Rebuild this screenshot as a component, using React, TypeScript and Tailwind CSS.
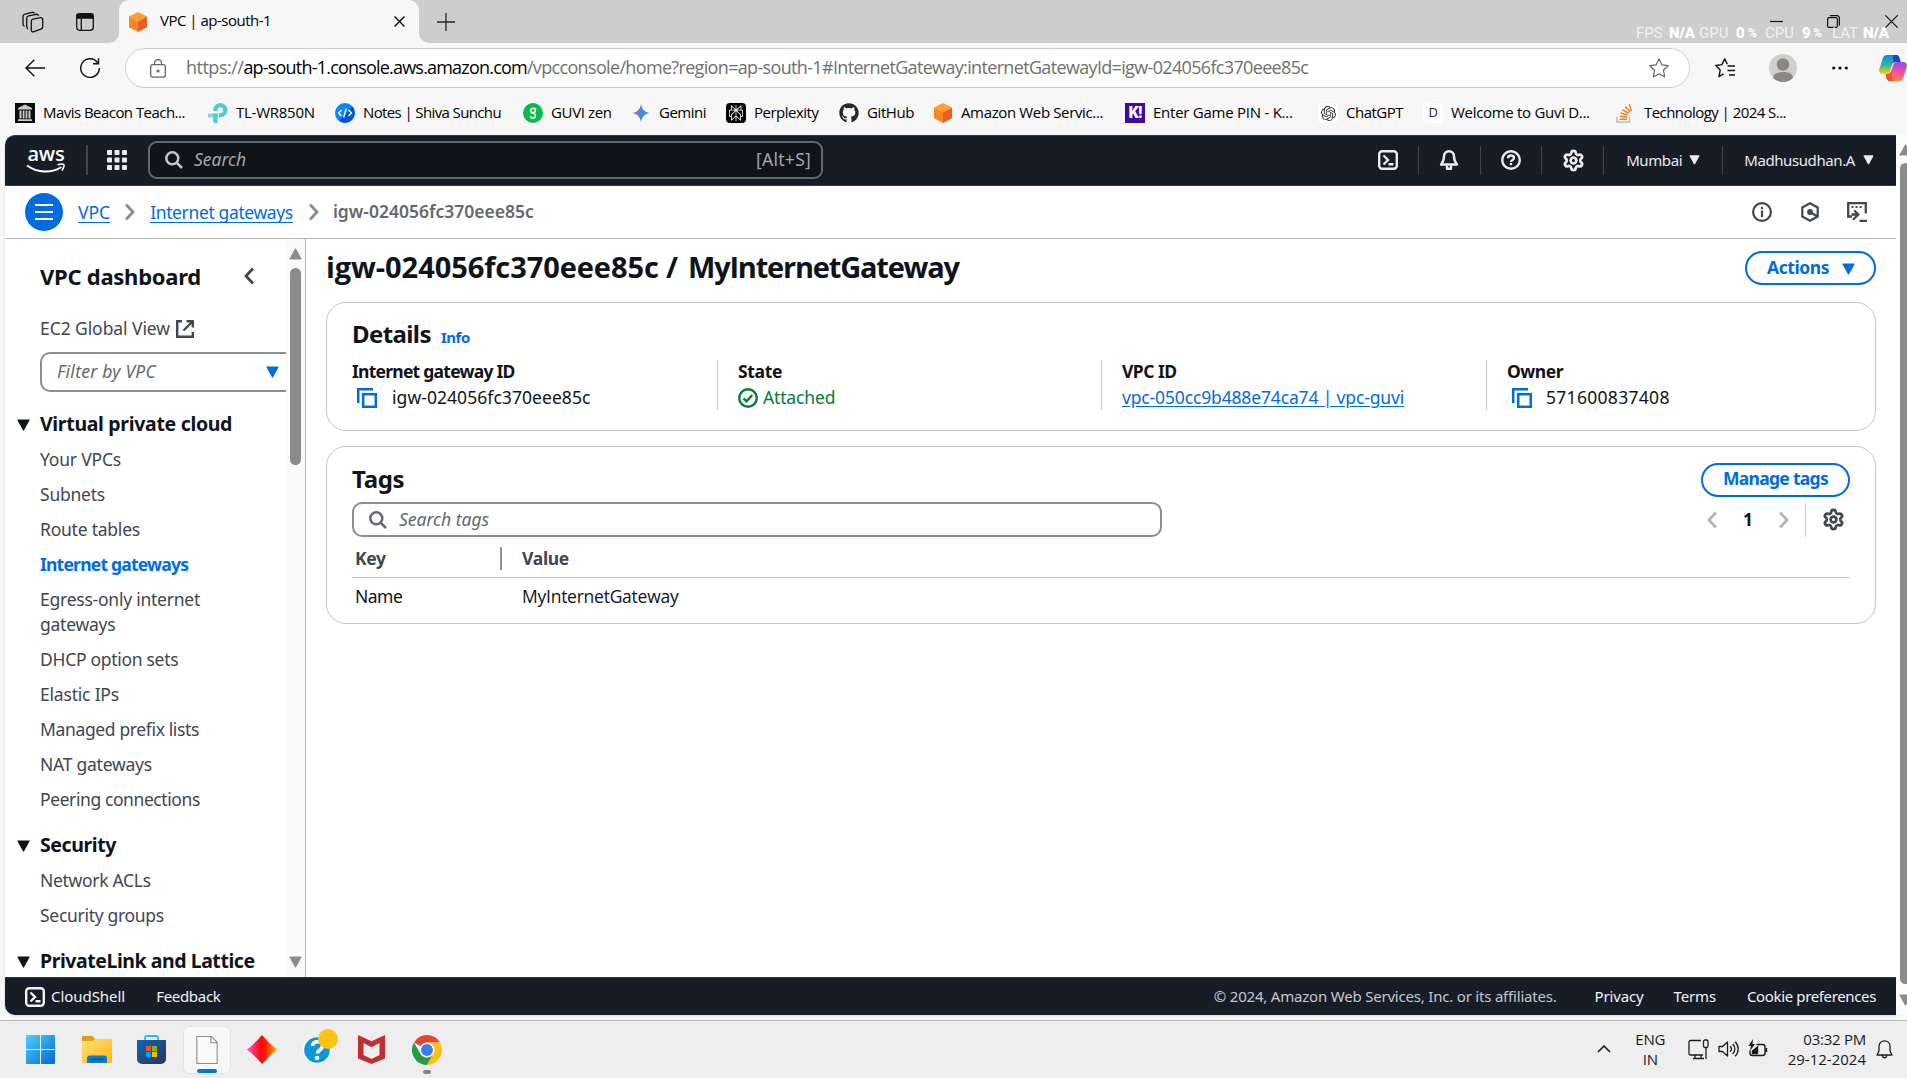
import type { ReactNode } from 'react'
import { Settings } from 'lucide-react'
import { FaGithub, FaStackOverflow } from 'react-icons/fa'
import { SiOpenai, SiPerplexity } from 'react-icons/si'

function Caret({ className = '' }: { className?: string }) {
  return (
    <svg viewBox="0 0 13 12" className={'shrink-0 ' + (className || 'h-3 w-[13px]')} fill="currentColor" stroke="currentColor" strokeWidth="1.2" strokeLinejoin="round">
      <path d="M1 1h11L6.5 11z" />
    </svg>
  )
}

function Chevron({ left = false, className = '' }: { left?: boolean; className?: string }) {
  return (
    <svg viewBox="0 0 10 18" className={'h-[18px] w-[10px] shrink-0 ' + className} fill="none" stroke="currentColor" strokeWidth="2.8">
      <path d={left ? 'M9 1.5L2 9l7 7.5' : 'M1 1.5L8 9l-7 7.5'} />
    </svg>
  )
}

function SearchIcon({ className = '' }: { className?: string }) {
  return (
    <svg viewBox="0 0 18 18" className={'size-[18px] shrink-0 ' + className} fill="none" stroke="currentColor" strokeWidth="2.5">
      <circle cx="7.3" cy="7.3" r="6" />
      <path d="M11.6 11.6L17 17" />
    </svg>
  )
}

function ShellIcon() {
  return (
    <svg viewBox="0 0 20 20" className="size-5 shrink-0" fill="none" stroke="currentColor" strokeWidth="2.4">
      <rect x="1.2" y="1.2" width="17.6" height="17.6" rx="3" />
      <path d="M5.5 5.500L10 10l-4.500 4.500M10.500 14.200h5" />
    </svg>
  )
}

function CopyIcon() {
  return (
    <svg viewBox="0 0 20 20" className="size-5 shrink-0 text-[#006ce0]" fill="none" stroke="currentColor" strokeWidth="2.5">
      <rect x="6.200" y="6.200" width="12.600" height="12.600" />
      <path d="M1.200 15V1.200H16" />
    </svg>
  )
}

function Cube() {
  return (
    <svg viewBox="0 0 18 20" className="h-5 w-[18px] shrink-0">
      <path d="M9 0l9 4.500L9 9.300 0 4.500z" fill="#ffa02f" />
      <path d="M0 4.500l9 4.800V20l-9-4.700z" fill="#f98523" />
      <path d="M18 4.500L9 9.300V20l9-4.700z" fill="#ec5f20" />
    </svg>
  )
}

/* ---------- Browser chrome ---------- */

function TabBar() {
  return (
    <div className="flex h-[43px] bg-[#f7f7f7]">
      <div className="flex w-[119px] items-center rounded-br-[10px] bg-[#cdcdcd] pl-[22px]">
        <svg viewBox="0 0 22 22" className="size-[22px]" fill="none" stroke="#111" strokeWidth="1.300" strokeLinejoin="round">
          <path d="M11 8.200l7.500-1.500c1.200-.2 2.200.5 2.200 1.800v7.300c0 1.200-.6 2-1.800 2.400l-7 2.500c-1.500.5-2.600-.2-2.600-1.700v-8.500c0-1.200.6-2 1.700-2.300z" />
          <path d="M6.200 17.800c-1-.3-1.500-1-1.500-2.200V7.200c0-1.200.8-2 1.900-2.300L14 3.300c1.200-.2 2.200.3 2.500 1.500M2.500 15.300C1.500 15 1 14.300 1 13.100V5.400C1 4.200 1.800 3.400 3 3.100l7-1.700c1.200-.2 2 .1 2.500 1" />
        </svg>
        <svg viewBox="0 0 18 18" className="ml-8 size-[18px]" fill="none" stroke="#111" strokeWidth="1.300">
          <rect x=".7" y=".7" width="16.600" height="16.600" rx="3" />
          <path d="M1 1.500h16V5H1z" fill="#111" />
          <path d="M5.300 5v12" />
        </svg>
      </div>
      <div className="bg-[#cdcdcd]">
        <div className="flex h-full w-[300px] items-center rounded-t-[10px] bg-[#f7f7f7] pl-[10px]">
          <Cube />
          <span className="ml-[13px] w-[234px] pb-0.5 text-[15px] tracking-[-0.5px]">VPC | ap-south-1</span>
          <svg viewBox="0 0 11 11" className="size-[11px]" stroke="#111" strokeWidth="1.500"><path d="M.5.5l10 10M10.500.5l-10 10" /></svg>
        </div>
      </div>
      <div className="relative flex flex-1 items-center rounded-bl-[10px] bg-[#cdcdcd] pl-[18px]">
        <svg viewBox="0 0 18 18" className="size-[18px]" stroke="#222" strokeWidth="1.300"><path d="M9 0v18M0 9h18" /></svg>
        <div className="ml-auto flex items-center pr-[9px]">
          <svg viewBox="0 0 13 13" className="size-[13px]" stroke="#111" strokeWidth="1.200"><path d="M0 6.500h13" /></svg>
          <svg viewBox="0 0 13 13" className="ml-11 size-[13px]" fill="none" stroke="#111" strokeWidth="1.200">
            <rect x=".6" y="2.600" width="9.800" height="9.800" rx="1.500" />
            <path d="M2.800.6h7.200a2.400 2.400 0 0 1 2.400 2.400v7.500" />
          </svg>
          <svg viewBox="0 0 13 13" className="ml-[45px] size-[13px]" stroke="#111" strokeWidth="1.200"><path d="M.3.3l12.400 12.400M12.700.3L.3 12.700" /></svg>
        </div>
        <div className="absolute top-6 right-[18px] flex h-[18px] items-center font-['Roboto'] text-[15px] leading-[18px] whitespace-nowrap text-white/75">
          <span className="w-[33px]">FPS</span><b className="w-[30px] font-black text-white">N/A</b>
          <span className="w-[37px]">GPU</span><b className="w-3 font-black text-white">0</b><b className="w-[17px] text-[12px] text-white">%</b>
          <span className="w-[37px]">CPU</span><b className="w-[11px] font-black text-white">9</b><b className="w-[19px] text-[12px] text-white">%</b>
          <span className="w-[31px]">LAT</span><b className="font-black text-white">N/A</b>
        </div>
      </div>
    </div>
  )
}

function AddressBar() {
  return (
    <div className="flex h-[49px] items-center pt-px">
      <svg viewBox="0 0 20 18" className="ml-[25px] h-[18px] w-5" fill="none" stroke="#111" strokeWidth="1.400"><path d="M20 9H1M9.300.7L1 9l8.300 8.300" /></svg>
      <svg viewBox="0 0 20 20" className="ml-[35px] size-5" fill="none" stroke="#111" strokeWidth="1.400"><path d="M17.800 5A9.300 9.300 0 1 0 19.300 10M18.500.3v5.500H13" /></svg>
      <div className="ml-[25px] flex h-10 w-[1565px] items-center rounded-full border border-[#cfcfcf] bg-white pl-6">
        <svg viewBox="0 0 16 19" className="h-[19px] w-4 shrink-0" fill="none" stroke="#666" strokeWidth="1.300">
          <rect x=".7" y="5.700" width="14.600" height="12.500" rx="2" />
          <path d="M4.500 5.500V4a3.500 3.500 0 0 1 7 0v1.500" />
          <circle cx="8" cy="12" r=".9" fill="#666" />
        </svg>
        <p className="ml-5 flex flex-1 pb-px text-[18px] whitespace-nowrap text-[#707070]">
          <span className="tracking-[-0.5px]">https://</span>
          <span className="tracking-[-0.8px] text-black">ap-south-1.console.aws.amazon.com</span>
          <span className="tracking-[-0.66px]">/vpcconsole/home?region=ap-south-1#InternetGateway:internetGatewayId=igw-024056fc370eee85c</span>
        </p>
        <svg viewBox="0 0 20 20" className="mr-5 size-5" fill="none" stroke="#666" strokeWidth="1.200" strokeLinejoin="round">
          <path d="M10 .8l2.800 6 6.400.9-4.700 4.600 1.200 6.600L10 15.700l-5.700 3.200 1.200-6.600L.8 7.700l6.400-.9z" />
        </svg>
      </div>
      <svg viewBox="0 0 21 20" className="ml-[25px] h-5 w-[21px]" fill="none" stroke="#111" strokeWidth="1.400" strokeLinejoin="round">
        <path d="M8.500 15.800L4 18.700l1.200-6.600L.8 7.500l6.100-.9L9.800.8l2.500 5.500M12.500 8H20M12.500 12.500H20M14 17h6" />
      </svg>
      <svg viewBox="0 0 28 28" className="ml-[33px] size-7">
        <defs><clipPath id="avatar"><circle cx="14" cy="14" r="14" /></clipPath></defs>
        <g clipPath="url(#avatar)">
          <rect width="28" height="28" fill="#d1cfcc" />
          <circle cx="14" cy="10.500" r="6.200" fill="#8a8683" />
          <path d="M4 24c0-4 4-6 10-6s10 2 10 6l-3 4H7z" fill="#8a8683" />
        </g>
      </svg>
      <svg viewBox="0 0 16 4" className="ml-[35px] h-1 w-4" fill="#111"><circle cx="1.700" cy="2" r="1.600" /><circle cx="8" cy="2" r="1.600" /><circle cx="14.300" cy="2" r="1.600" /></svg>
      <svg viewBox="0 0 28 26" className="ml-[31px] h-[26px] w-7 shrink-0">
        <defs>
          <linearGradient id="cpA" x1="0" y1="0" x2="0" y2="1"><stop offset="0" stopColor="#1685e8" /><stop offset=".5" stopColor="#2bb5a0" /><stop offset="1" stopColor="#ffd400" /></linearGradient>
          <linearGradient id="cpB" x1=".5" y1="0" x2=".3" y2="1"><stop offset="0" stopColor="#a04bea" /><stop offset=".5" stopColor="#f0509a" /><stop offset="1" stopColor="#ff8a3a" /></linearGradient>
        </defs>
        <path d="M8 0h9c2.500 0 3 1.500 3.600 3.500l1 3.500H17c-2.500 0-3.500 1.300-4.200 3.500l-1.600 5.500C10.500 18 9.500 19 7.500 19H4c-3 0-4.500-2-3.700-5L3.500 4C4.300 1.500 5.500 0 8 0z" fill="url(#cpA)" />
        <path d="M14 0h3c2.500 0 3 1.500 3.600 3.500l1 3.500H17c-1 0-2 .3-2.700 1z" fill="#1b46bd" />
        <path d="M20 26h-9c-2.500 0-3-1.500-3.600-3.500L6.600 19h1.900c2 0 3.200-1.200 3.900-3.500l1.600-5.300C14.700 8 16 7 18 7h6c3 0 4.500 2 3.700 5l-3 9.500c-.8 3-2.200 4.500-4.700 4.500z" fill="url(#cpB)" />
        <path d="M14 26h-3c-2.500 0-3-1.500-3.600-3.500L6.600 19h1.900c1.800 0 3-1 3.700-2.800z" fill="#f4502c" />
      </svg>
    </div>
  )
}

function Bookmark({ icon, className, children }: { icon: ReactNode; className: string; children: ReactNode }) {
  return (
    <div className={'flex shrink-0 items-center gap-2 whitespace-nowrap ' + className}>
      <span className="flex size-5 shrink-0 items-center justify-center">{icon}</span>
      <span className="pb-0.5 text-[15px]">{children}</span>
    </div>
  )
}

function Bookmarks() {
  return (
    <div className="flex h-[42px] items-center pl-[15px]">
      <Bookmark className="w-[193px] tracking-[-0.54px]" icon={
        <svg viewBox="0 0 20 20" className="size-5"><rect width="20" height="20" fill="#0c0c0c" /><path d="M3 5l7-3.500L17 5v1.500H3zM4.500 7.500h2v8h-2zM7.700 7.500h1.800v8H7.700zM10.600 7.500h1.800v8h-1.800zM13.500 7.500h2v8h-2zM3 16.200h14V18H3z" fill="#c9c9c9" /></svg>
      }>Mavis Beacon Teach...</Bookmark>
      <Bookmark className="w-[127px] tracking-[-0.25px]" icon={
        <svg viewBox="0 0 20 20" className="size-5"><path d="M7.300 8V7a5 5 0 1 1 5.200 5.200H11" fill="none" stroke="#4acbd6" strokeWidth="4.300" /><path d="M0 10.500h10v4H0z" fill="#7fdbe2" /><path d="M5.200 10.500h4.300V20H7.200a2 2 0 0 1-2-2z" fill="#4acbd6" /></svg>
      }>TL-WR850N</Bookmark>
      <Bookmark className="w-[188px] tracking-[-0.62px]" icon={
        <svg viewBox="0 0 20 20" className="size-5"><circle cx="10" cy="10" r="10" fill="#0a84ff" /><path d="M17.500 3.500A10 10 0 0 1 4 18z" fill="#0950d8" /><path d="M6.500 7L3.500 10l3 3M13.500 7l3 3-3 3M11.300 5.500l-2.600 9" fill="none" stroke="#fff" strokeWidth="1.400" /></svg>
      }>Notes | Shiva Sunchu</Bookmark>
      <Bookmark className="w-[108px] tracking-[-0.35px]" icon={
        <svg viewBox="0 0 20 20" className="size-5"><circle cx="10" cy="10" r="10" fill="#0cba4d" /><g fill="none" stroke="#fff" strokeWidth="1.500"><circle cx="10" cy="7.500" r="2.200" /><path d="M8.500 10c3 0 4 1 3.800 2.900a2.300 2.300 0 0 1-4.600 0M12 5.800l1-.8" /></g></svg>
      }>GUVI zen</Bookmark>
      <Bookmark className="w-[95px] tracking-[-0.5px]" icon={
        <svg viewBox="0 0 20 20" className="size-5"><defs><linearGradient id="gem" x1="0" x2="1"><stop offset="0" stopColor="#8e75c8" /><stop offset=".5" stopColor="#4f86e0" /><stop offset="1" stopColor="#1fa5dc" /></linearGradient></defs><path d="M10 1c.8 5 3.500 8 8.500 9-5 1-7.700 4-8.500 9-.8-5-3.500-8-8.500-9 5-1 7.700-4 8.500-9z" fill="url(#gem)" /></svg>
      }>Gemini</Bookmark>
      <Bookmark className="w-[113px] tracking-[-0.5px]" icon={<span className="flex size-5 items-center justify-center rounded-sm bg-black text-white"><SiPerplexity size={16} /></span>}>Perplexity</Bookmark>
      <Bookmark className="w-[94px] tracking-[-0.4px]" icon={<FaGithub size={20} color="#24292f" />}>GitHub</Bookmark>
      <Bookmark className="w-[192px] tracking-[-0.36px]" icon={<Cube />}>Amazon Web Servic...</Bookmark>
      <Bookmark className="w-[193px] tracking-[-0.25px]" icon={
        <span className="flex size-5 items-center justify-center bg-[#3c0ca3] font-['Roboto'] text-[16px] font-black tracking-tighter text-white">K!</span>
      }>Enter Game PIN - K...</Bookmark>
      <Bookmark className="w-[105px] tracking-[-0.5px]" icon={<span className="flex size-5 items-center justify-center rounded bg-white"><SiOpenai size={15} color="#333" /></span>}>ChatGPT</Bookmark>
      <Bookmark className="w-[193px] tracking-[-0.3px]" icon={<span className="flex size-5 items-center justify-center rounded bg-white text-[13px] font-medium text-[#1c2340]">D</span>}>Welcome to Guvi D...</Bookmark>
      <Bookmark className="tracking-[-0.55px]" icon={
        <svg viewBox="0 0 20 20" className="size-5" fill="none">
          <path d="M1 13.500v5.500h12.500v-5.500" stroke="#b9babb" strokeWidth="1.500" />
          <path d="M3.500 16.200h7.500M3.700 13.200l7.400.7M4.600 10l7.100 2M6.400 6.700l6.300 3.800M9.300 3.600l4.900 5.700M13.300 1.200l2.200 7" stroke="#f48024" strokeWidth="1.500" />
        </svg>
      }>Technology | 2024 S...</Bookmark>
    </div>
  )
}

/* ---------- AWS console ---------- */

function NavDivider() {
  return <span className="h-[29px] w-px bg-[#424650]" />
}

function ConsoleHeader() {
  return (
    <header className="flex h-[51px] items-center rounded-tl-[10px] border-y border-[#333843] bg-[#161d26] pb-px text-[#ebebf0]">
      <div className="relative ml-[21px] flex h-[26px] w-10 flex-col items-center">
        <span className="font-['Open_Sans'] text-[20px] leading-[13px] font-semibold tracking-[-0.2px] text-white">aws</span>
        <svg viewBox="0 0 40 10" className="absolute bottom-0 left-0 h-2.5 w-10" fill="none" stroke="#fff">
          <path d="M1 2.500c10.500 7.500 24.500 8 34.500 1.500" strokeWidth="2" />
          <path d="M31.500 1.700c3-.8 5.600-.8 6.200-.1.600.8-.2 3.600-1.700 6" strokeWidth="1.600" />
        </svg>
      </div>
      <span className="ml-5 h-[30px] w-0.5 bg-[#424650]" />
      <svg viewBox="0 0 20 20" className="ml-[19px] size-5" fill="currentColor">
        {[0, 7.5, 15].map(y => [0, 7.5, 15].map(x => <rect key={x + '-' + y} x={x} y={y} width="5" height="5" rx=".8" />))}
      </svg>
      <div className="ml-[21px] flex h-[38px] w-[675px] items-center rounded-[9px] border-2 border-[#656871] bg-[#0f141a] pr-[10px] pl-[15px]">
        <SearchIcon className="text-[#c6c6cd]" />
        <span className="ml-[11px] flex-1 pb-px text-[17.500px] text-[#a4a4ad] italic">Search</span>
        <span className="pb-px text-[17.500px] tracking-[0.25px] text-[#a4a4ad]">[Alt+S]</span>
      </div>
      <div className="ml-auto flex items-center">
        <ShellIcon />
        <span className="w-5" /><NavDivider />
        <svg viewBox="0 0 20 20" className="ml-5 size-5" fill="none" stroke="currentColor" strokeWidth="2.400" strokeLinejoin="round">
          <path d="M10 1.200a5 5 0 0 1 5 5c0 3.600.8 6 3 8.300H2c2.200-2.300 3-4.700 3-8.300a5 5 0 0 1 5-5z" /><path d="M8 15.500v3.200h4v-3.200" />
        </svg>
        <span className="w-[21px]" /><NavDivider />
        <svg viewBox="0 0 20 20" className="ml-5 size-5" fill="none" stroke="currentColor" strokeWidth="2.400">
          <circle cx="10" cy="10" r="8.800" /><path d="M7 8.200c0-1.800 1.300-2.700 3-2.700s3 .9 3 2.500c0 2-3 1.800-3 4" /><path d="M10 13v2.200" />
        </svg>
        <span className="w-5" /><NavDivider />
        <Settings className="ml-5 size-[23px]" strokeWidth={2.8} />
        <span className="w-[18px]" /><NavDivider />
        <span className="ml-[22px] pt-px text-[15px] tracking-[-0.4px]">Mumbai</span>
        <Caret className="ml-[7px] h-[10px] w-[11px]" />
        <span className="w-[22px]" /><NavDivider />
        <span className="ml-[21px] pt-px text-[15px] tracking-[-0.4px]">Madhusudhan.A</span>
        <Caret className="mr-[22px] ml-[8px] h-[10px] w-[11px]" />
      </div>
    </header>
  )
}

function Breadcrumbs() {
  return (
    <div className="flex h-[53px] shrink-0 items-center border-b border-[#b6b6bf] pr-[29px] pl-5 text-[17.500px]">
      <span className="flex size-[38px] shrink-0 flex-col items-center justify-center gap-[5px] rounded-full bg-[#006ce0]">
        <i className="h-0.5 w-[18px] bg-white" /><i className="h-0.5 w-[18px] bg-white" /><i className="h-0.5 w-[18px] bg-white" />
      </span>
      <span className="ml-[15px] border-b border-[#006ce0] leading-[20px] text-[#006ce0]">VPC</span>
      <Chevron className="ml-[15px] text-[#8c8c94]" />
      <span className="ml-[15px] border-b border-[#006ce0] leading-[20px] tracking-[-0.37px] text-[#006ce0]">Internet gateways</span>
      <Chevron className="ml-[16px] text-[#8c8c94]" />
      <span className="ml-[14px] pb-0.5 font-semibold text-[#656871]">igw-024056fc370eee85c</span>
      <div className="ml-auto flex items-center text-[#424650]">
        <svg viewBox="0 0 20 20" className="size-5" fill="none" stroke="currentColor" strokeWidth="2.200"><circle cx="10" cy="10" r="8.900" /><path d="M10 8.500V15M10 5v2.200" /></svg>
        <svg viewBox="0 0 20 20" className="ml-[28px] size-5" fill="none" stroke="currentColor" strokeWidth="2.200"><path d="M10 1.300l7.700 4.200v9L10 18.700l-7.700-4.200v-9z" /><circle cx="10" cy="10" r="1.800" fill="currentColor" /><path d="M10 10l7 4.300" strokeWidth="2.400" /></svg>
        <svg viewBox="0 0 20 20" className="ml-[27px] size-5" fill="none" stroke="currentColor" strokeWidth="2.300"><path d="M5 14.500H1.200V1.200H18.800V11.500M12.500 18.800H20M4.500 12.500h6M7.300 8.500l4 4-5.300 5.300" /><path d="M4.500 5h2M8.500 5h2M12.500 5h2" strokeWidth="2" /></svg>
      </div>
    </div>
  )
}

function NavGroup({ title, titleClass, children }: { title: string; titleClass: string; children?: ReactNode }) {
  return (
    <section>
      <h3 className="flex h-[25px] items-center text-[19.500px] font-bold text-[#0f141a]">
        <span className="mr-[10px] ml-3 flex"><Caret /></span>
        <span className={'pb-px ' + titleClass}>{title}</span>
      </h3>
      <ul className="mt-[10px] mb-px flex flex-col gap-[10px] pl-[35px] text-[17.500px] leading-[25px] text-[#424650]">{children}</ul>
    </section>
  )
}

function Sidebar() {
  return (
    <aside className="flex w-[301px] shrink-0 border-r border-[#b6b6bf]">
      <div className="w-[281px] overflow-hidden whitespace-nowrap">
        <div className="mt-[23px] flex h-7 items-center pl-[35px]">
          <h2 className="w-[204px] text-[22px] font-bold tracking-[-0.26px] text-[#0f141a]">VPC dashboard</h2>
          <Chevron left className="text-[#424650]" />
        </div>
        <div className="mt-[25px] flex h-[26px] items-center pl-[35px] text-[17.500px] tracking-[-0.08px] text-[#424650]">
          EC2 Global View
          <svg viewBox="0 0 18 18" className="mt-0.5 ml-[6px] size-[18px]" fill="none" stroke="currentColor" strokeWidth="2.400"><path d="M6 1.200H1.200v15.600h15.600V12M10.500 1.200h6.300v6.300M16.500 1.500L7.500 10.500" /></svg>
        </div>
        <div className="mt-[11px] ml-[35px] flex h-10 w-[270px] items-center rounded-[10px] border-2 border-[#8c8c94] pl-[15px]">
          <span className="w-[209px] pb-px text-[17.500px] tracking-[0.25px] text-[#656871] italic">Filter by VPC</span>
          <span className="text-[#006ce0]"><Caret /></span>
        </div>
        <div className="mt-5 flex flex-col gap-5">
          <NavGroup title="Virtual private cloud" titleClass="tracking-[-0.32px]">
            <li className="tracking-[-0.19px]">Your VPCs</li>
            <li className="tracking-[-0.23px]">Subnets</li>
            <li className="tracking-[-0.23px]">Route tables</li>
            <li className="font-bold tracking-[-0.78px] text-[#006ce0]">Internet gateways</li>
            <li className="tracking-[-0.24px]">Egress-only internet<br />gateways</li>
            <li className="tracking-[-0.3px]">DHCP option sets</li>
            <li className="tracking-[-0.2px]">Elastic IPs</li>
            <li className="tracking-[-0.36px]">Managed prefix lists</li>
            <li className="tracking-[-0.25px]">NAT gateways</li>
            <li className="tracking-[-0.41px]">Peering connections</li>
          </NavGroup>
          <NavGroup title="Security" titleClass="tracking-[-0.4px]">
            <li className="tracking-[-0.3px]">Network ACLs</li>
            <li className="tracking-[-0.3px]">Security groups</li>
          </NavGroup>
          <NavGroup title="PrivateLink and Lattice" titleClass="tracking-[-0.45px]" />
        </div>
      </div>
      <div className="flex w-[19px] flex-col items-center bg-[#fafafa] pt-[9px]">
        <span className="rotate-180 text-[#8b8b8b]"><Caret className="block h-3 w-[13px]" /></span>
        <span className="mt-[8px] h-[197px] w-[11px] rounded-full bg-[#8b8b8b]" />
        <span className="mt-auto mb-[9px] text-[#8b8b8b]"><Caret className="block h-3 w-[13px]" /></span>
      </div>
    </aside>
  )
}

function Field({ label, labelClass, className, children }: { label: string; labelClass: string; className: string; children: ReactNode }) {
  return (
    <div className={'h-[50px] shrink-0 ' + className}>
      <div className={'h-[25px] leading-[23px] font-bold ' + labelClass}>{label}</div>
      <div className="flex h-[25px] items-center whitespace-nowrap">{children}</div>
    </div>
  )
}

function Main() {
  return (
    <main className="min-w-0 flex-1 pr-5 pl-[20px] text-[17.500px] text-[#0f141a]">
      <div className="mt-3 flex h-[34px] items-center justify-between">
        <h1 className="flex pb-0.5 font-['Open_Sans'] text-[29px] font-bold">
          <span className="w-[340px] tracking-[-0.07px]">igw-024056fc370eee85c</span>
          <span className="w-[22px]">/</span>
          <span className="tracking-[-1.2px]">MyInternetGateway</span>
        </h1>
        <button className="flex h-[34px] w-[131px] items-center rounded-full border-2 border-[#006ce0] pb-px pl-5 font-bold tracking-[-0.44px] text-[#006ce0]">
          Actions<span className="ml-[13px] pt-0.5"><Caret /></span>
        </button>
      </div>

      <section className="mt-[17px] h-[129px] rounded-[20px] border border-[#c6c6cd] px-[25px]">
        <div className="mt-[16px] flex h-[30px] items-baseline">
          <h2 className="text-[24px] leading-[30px] font-bold tracking-[-0.6px]">Details</h2>
          <span className="ml-[10px] text-[15px] font-bold tracking-[-0.44px] text-[#006ce0]">Info</span>
        </div>
        <div className="mt-[11px] flex">
          <Field className="w-[365px]" label="Internet gateway ID" labelClass="tracking-[-0.75px]">
            <span className="ml-[5px] flex"><CopyIcon /></span><span className="ml-[15px] pb-px tracking-[0.06px]">igw-024056fc370eee85c</span>
          </Field>
          <Field className="w-[384px] border-l border-[#c6c6cd] pl-5" label="State" labelClass="tracking-[-0.35px]">
            <svg viewBox="0 0 20 20" className="size-5 text-[#00802f]" fill="none" stroke="currentColor" strokeWidth="2.400"><circle cx="10" cy="10" r="8.800" /><path d="M5.500 10.300l3 3 5.800-6.300" /></svg>
            <span className="ml-[5px] pb-px tracking-[-0.15px] text-[#00802f]">Attached</span>
          </Field>
          <Field className="w-[385px] border-l border-[#c6c6cd] pl-5" label="VPC ID" labelClass="tracking-[-0.5px]">
            <span className="pb-px tracking-[-0.15px] text-[#006ce0] underline underline-offset-2">vpc-050cc9b488e74ca74 | vpc-guvi</span>
          </Field>
          <Field className="border-l border-[#c6c6cd] pl-5" label="Owner" labelClass="tracking-[-0.49px]">
            <span className="ml-[5px] flex"><CopyIcon /></span><span className="ml-[14px] pb-px tracking-[0.3px]">571600837408</span>
          </Field>
        </div>
      </section>

      <section className="mt-[15px] h-[178px] rounded-[20px] border border-[#c6c6cd] px-[25px] pt-4">
        <div className="flex h-[34px] items-center justify-between">
          <h2 className="pb-0.5 text-[24px] font-bold tracking-[-0.3px]">Tags</h2>
          <button className="h-[34px] w-[149px] rounded-full border-2 border-[#006ce0] pb-[3px] font-bold tracking-[-0.71px] text-[#006ce0]">Manage tags</button>
        </div>
        <div className="mt-[5px] flex h-[35px] items-center">
          <div className="flex h-[35px] w-[810px] items-center rounded-[10px] border-2 border-[#8c8c94] pl-[15px]">
            <SearchIcon className="text-[#656871]" />
            <span className="ml-3 text-[#656871] italic">Search tags</span>
          </div>
          <div className="ml-auto flex items-center pr-[5px]">
            <Chevron left className="text-[#b4b4bb]" />
            <span className="ml-[26px] w-[10px] font-bold">1</span>
            <Chevron className="ml-[26px] text-[#b4b4bb]" />
            <span className="ml-4 h-[34px] w-px bg-[#c6c6cd]" />
            <Settings className="ml-4 size-[23px] text-[#424650]" strokeWidth={2.8} />
          </div>
        </div>
        <div className="flex h-[41px] items-center border-b border-[#c6c6cd] pt-[3px] pl-[3px] font-bold text-[#424650]">
          <span className="w-[145px] tracking-[-0.3px]">Key</span>
          <span className="h-[23px] w-0.5 bg-[#8c8c94]" />
          <span className="ml-5 tracking-[-0.31px]">Value</span>
        </div>
        <div className="flex h-[37px] items-center pl-[3px]">
          <span className="w-[167px] tracking-[-0.5px]">Name</span>
          <span className="font-['Open_Sans'] tracking-[-0.25px]">MyInternetGateway</span>
        </div>
      </section>
    </main>
  )
}

function ConsoleFooter() {
  return (
    <footer className="flex h-[38px] shrink-0 items-center rounded-bl-[10px] border-t border-[#333843] bg-[#161d26] pr-[20px] pl-5 text-[15px] text-[#f3f3f7]">
      <ShellIcon />
      <span className="ml-[6px] tracking-[-0.05px]">CloudShell</span>
      <span className="ml-[31px] tracking-[-0.3px]">Feedback</span>
      <span className="ml-auto tracking-[-0.2px] text-[#c6c6cd]">© 2024, Amazon Web Services, Inc. or its affiliates.</span>
      <span className="ml-[38px] tracking-[-0.15px]">Privacy</span>
      <span className="ml-[30px] tracking-[-0.15px]">Terms</span>
      <span className="ml-[31px] tracking-[-0.36px]">Cookie preferences</span>
    </footer>
  )
}

function PageScrollbar() {
  return (
    <div className="flex w-[11px] flex-col items-start overflow-hidden bg-[#fcfcfc] pt-[9px] pl-[3px]">
      <span className="rotate-180 text-[#8b8b8b]"><Caret className="block h-3 w-[13px]" /></span>
      <span className="mt-[7px] ml-px h-[821px] w-[11px] shrink-0 rounded-full bg-[#8b8b8b]" />
      <span className="mt-auto mb-[9px] text-[#8b8b8b]"><Caret className="block h-3 w-[13px]" /></span>
    </div>
  )
}

/* ---------- Windows taskbar ---------- */

function Taskbar() {
  return (
    <div className="flex h-[58px] items-center border-t border-[#bdbdbd] bg-[#eeeeee] text-[#1b1b1b]">
      <svg viewBox="0 0 29 29" className="ml-[26px] size-[29px]">
        <defs><linearGradient id="win" gradientUnits="userSpaceOnUse" x1="0" y1="0" x2="29" y2="29"><stop offset="0" stopColor="#4fd0ff" /><stop offset="1" stopColor="#0069cf" /></linearGradient></defs>
        <path d="M0 1a1 1 0 0 1 1-1h13v14H0zM15 0h13a1 1 0 0 1 1 1v13H15zM0 15h14v14H1a1 1 0 0 1-1-1zM15 15h14v13a1 1 0 0 1-1 1H15z" fill="url(#win)" />
      </svg>
      <svg viewBox="0 0 30 27" className="ml-[27px] h-[27px] w-[30px]">
        <defs><linearGradient id="fold" x1="0" y1="0" x2="1" y2="1"><stop offset="0" stopColor="#ffe07a" /><stop offset="1" stopColor="#fbb812" /></linearGradient></defs>
        <path d="M0 1.500C0 .5.500 0 1.500 0h8c.8 0 1.200.3 1.700.8L13 3v4H0z" fill="#e0a008" />
        <path d="M0 5h10.500l2.500-2h15.500c1 0 1.500.5 1.500 1.500V26c0 .6-.4 1-1 1H1c-.6 0-1-.4-1-1z" fill="url(#fold)" />
        <path d="M5 27v-4.500c0-2 1-3 3-3h14c2 0 3 1 3 3V27z" fill="#0f77cc" />
        <path d="M8.500 23.500h13" stroke="#0a4a86" strokeWidth="1.400" />
      </svg>
      <svg viewBox="0 0 29 29" className="ml-[25px] size-[29px]">
        <defs><linearGradient id="store" x1="0" y1="0" x2="1" y2="1"><stop offset="0" stopColor="#0b67b5" /><stop offset="1" stopColor="#2c3360" /></linearGradient></defs>
        <path d="M8 6V2.500C8 1.500 8.500 1 9.500 1h10c1 0 1.500.5 1.500 1.500V6" fill="none" stroke="#2cbcf5" strokeWidth="1.800" />
        <path d="M0 5h29v19a5 5 0 0 1-5 5H5a5 5 0 0 1-5-5z" fill="url(#store)" />
        <path d="M9 11h5v5H9z" fill="#f25022" /><path d="M15 11h5v5h-5z" fill="#7fba00" /><path d="M9 17h5v5H9z" fill="#00a4ef" /><path d="M15 17h5v5h-5z" fill="#ffb900" />
      </svg>
      <div className="ml-[17px] flex h-12 w-12 flex-col items-center rounded-md border border-[#e4e4e4] bg-[#f8f8f8] pt-[9px]">
        <svg viewBox="0 0 22 29" className="h-[29px] w-[22px]" fill="#fafafa" stroke="#8b8b8b" strokeWidth="1.100"><path d="M.5.500h15l6 6v22H.5zM15 .5v6.500h6.500" /></svg>
        <span className="mt-[5px] h-1 w-5 rounded-full bg-[#0078d4]" />
      </div>
      <svg viewBox="0 0 30 29" className="ml-4 h-[29px] w-[30px]">
        <defs><linearGradient id="dia"><stop offset="0" stopColor="#ff4fd8" /><stop offset=".45" stopColor="#ff0a0a" /><stop offset=".6" stopColor="#ff1a00" /><stop offset="1" stopColor="#ffae00" /></linearGradient></defs>
        <path d="M15 0q6.500 8 15 14.500Q21.500 21 15 29 8.500 21 0 14.500 8.500 8 15 0z" fill="url(#dia)" />
      </svg>
      <div className="relative ml-[26px] size-[29px]">
        <svg viewBox="0 0 29 29" className="size-[29px]"><circle cx="14" cy="15" r="14" fill="#fff" /><circle cx="14" cy="15" r="12.800" fill="#0d97d8" /><path d="M9.500 11c.3-3 2.200-4.300 5-4.300 3 0 5 1.600 5 4.200 0 4-5 3.600-5 7.600" fill="none" stroke="#fff" strokeWidth="3.600" /><circle cx="14" cy="23" r="2.300" fill="#fff" /></svg>
        <span className="absolute -top-[6px] left-[15px] size-5 rounded-full bg-[#ffc20e]" />
      </div>
      <svg viewBox="0 0 27 29" className="ml-[26px] h-[29px] w-[27px]"><path d="M0 0l13.500 6.200L27 0v23.500L13.500 29 0 23.500zM5.500 8v12l8 4 8-4V8l-8 4.200z" fill="#c22f33" fillRule="evenodd" /></svg>
      <div className="relative ml-[27px] size-[30px]">
        <svg viewBox="0 0 48 48" className="size-[30px]">
          <circle cx="24" cy="24" r="24" fill="#fff" />
          <path d="M24 0a24 24 0 0 1 20.800 12H24a12 12 0 0 0-10.400 6L3.200 12A24 24 0 0 1 24 0z" fill="#ea4335" />
          <path d="M3.200 12a24 24 0 0 0 20.800 36l10.400-18a12 12 0 0 1-20.800 0z" fill="#2a9a48" />
          <path d="M44.800 12A24 24 0 0 1 24 48l10.400-18a12 12 0 0 0 0-12H24l0-6z" fill="#fbc116" />
          <circle cx="24" cy="24" r="11.500" fill="#fff" /><circle cx="24" cy="24" r="9.500" fill="#3b7ded" />
        </svg>
        <span className="absolute -bottom-[9px] left-[11px] h-1 w-2 rounded-full bg-[#868686]" />
      </div>

      <div className="ml-auto flex items-center pb-px text-[15px] leading-5">
        <svg viewBox="0 0 14 8" className="mr-6 h-2 w-3.5" fill="none" stroke="currentColor" strokeWidth="1.600"><path d="M1 7l6-6 6 6" /></svg>
        <div className="w-[31px] text-center tracking-[-0.2px]">ENG<br />IN</div>
        <svg viewBox="0 0 21 21" className="ml-[22px] size-[21px]" fill="none" stroke="currentColor" strokeWidth="1.300">
          <path d="M13 1.500H2.500a1.500 1.500 0 0 0-1.500 1.500v11.500A1.500 1.500 0 0 0 2.500 16H15M5 19.500h11M7 16v3.500M13 16v3.500M18 8.500V20" /><rect x="15.500" y="1" width="4.500" height="7.500" rx="1.500" />
        </svg>
        <svg viewBox="0 0 21 18" className="ml-[9px] h-[18px] w-[21px]" fill="none" stroke="currentColor" strokeWidth="1.300" strokeLinejoin="round">
          <path d="M1 6.500h3.500L9.500 2v14l-5-4.500H1zM12.200 6.300a4 4 0 0 1 0 5.400M14.700 4a7 7 0 0 1 0 10M17.200 1.700a10.500 10.500 0 0 1 0 14.600" />
        </svg>
        <svg viewBox="0 0 20 21" className="ml-[9px] h-[21px] w-5" fill="none" stroke="currentColor" strokeWidth="1.400">
          <path d="M8.500 5.500h6a2.500 2.500 0 0 1 2.500 2.500v6a2.500 2.500 0 0 1-2.500 2.500h-10A2.500 2.500 0 0 1 2 14v-2.500M18.500 9v4" /><path d="M4.500 14.500V12l5-4v6.500z" fill="currentColor" /><path d="M5 0L.5 7H3l-1 5 5-7H4.500z" fill="currentColor" stroke="none" />
        </svg>
        <div className="ml-5 pb-px text-right leading-[20px] whitespace-nowrap"><span className="tracking-[-0.25px]">03:32 PM</span><br /><span>29-12-2024</span></div>
        <svg viewBox="0 0 17 19" className="mr-[14px] ml-[10px] h-[19px] w-[17px]" fill="none" stroke="currentColor" strokeWidth="1.300" strokeLinejoin="round">
          <path d="M8.500.8c3.300 0 5.500 2.400 5.500 5.700v4.500l2 4H1l2-4V6.500C3 3.200 5.200.8 8.500.8zM6.300 15.500c.3 1.500 1 2.300 2.200 2.300s2-.8 2.200-2.300" />
        </svg>
      </div>
    </div>
  )
}

export default function App() {
  return (
    <div className="flex h-[1078px] w-[1907px] flex-col overflow-hidden bg-[#f7f7f7] font-['Open_Sans',sans-serif] text-black">
      <TabBar />
      <AddressBar />
      <Bookmarks />
      <div className="mt-px flex h-[880px] pl-[5px] font-['Noto_Sans',sans-serif]">
        <div className="flex w-[1891px] flex-col rounded-l-[10px] shadow">
          <ConsoleHeader />
          <div className="flex min-h-0 flex-1 flex-col bg-white">
            <Breadcrumbs />
            <div className="flex min-h-0 flex-1">
              <Sidebar />
              <Main />
            </div>
          </div>
          <ConsoleFooter />
        </div>
        <PageScrollbar />
      </div>
      <div className="h-[5px]" />
      <Taskbar />
    </div>
  )
}
